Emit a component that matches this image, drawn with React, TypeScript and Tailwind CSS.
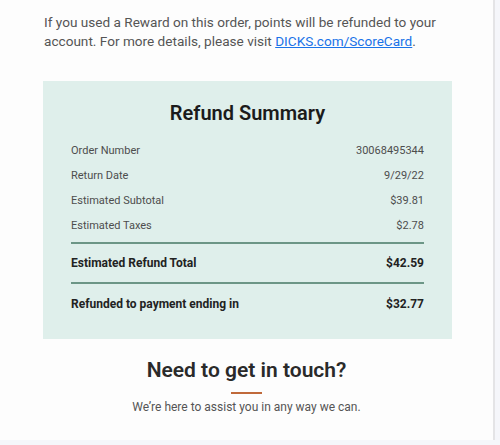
import React from "react";

const rows = [
  { label: "Order Number", value: "30068495344" },
  { label: "Return Date", value: "9/29/22" },
  { label: "Estimated Subtotal", value: "$39.81" },
  { label: "Estimated Taxes", value: "$2.78" },
];

export default function App() {
  return (
    <div className="flex h-[445px] w-[500px] flex-col bg-[#f5f6fa] font-['Roboto',sans-serif]">
      <div className="flex w-[495px] flex-1 flex-col border-r-2 border-[#e4e4e6] bg-[#fdfdfd] pt-[13px]">
        {/* Reward notice */}
        <p className="pl-[44px] pr-[40px] text-[13.6px] leading-[19px] text-[#555555]">
          If you used a Reward on this order, points will be refunded to your account. For more details, please visit{" "}
          <a href="#" className="text-[#1a73e8] underline">
            DICKS.com/ScoreCard
          </a>
          .
        </p>

        {/* Summary panel */}
        <div className="ml-[43px] mr-[41px] mt-[30px] h-[258px] bg-[#dfefeb] pl-[28px] pr-[28px] pt-[19px]">
          <h2 className="text-center text-[20px] font-semibold leading-[26px] text-[#1b1b1b]">Refund Summary</h2>
          <div className="mt-[13px] flex flex-col">
            {rows.map((r) => (
              <div key={r.label} className="flex h-[25px] items-center justify-between text-[11px] text-[#4d4d4d]">
                <span>{r.label}</span>
                <span>{r.value}</span>
              </div>
            ))}
          </div>
          <div className="mt-[3px] border-t-2 border-[#6c9686]" />
          <div className="flex h-[38px] items-center justify-between text-[12px] font-bold text-[#222222]">
            <span>Estimated Refund Total</span>
            <span>$42.59</span>
          </div>
          <div className="border-t-2 border-[#6c9686]" />
          <div className="flex h-[40px] items-center justify-between text-[12px] font-bold text-[#222222]">
            <span>Refunded to payment ending in</span>
            <span>$32.77</span>
          </div>
        </div>

        {/* Contact */}
        <div className="mt-[18px] flex flex-col items-center">
          <h3 className="text-[21px] font-semibold leading-[26px] text-[#2a2a2a]">Need to get in touch?</h3>
          <div className="mt-[9px] h-[2px] w-[31px] bg-[#c0693a]" />
          <p className="mt-[4px] text-[12px] text-[#555555]">We’re here to assist you in any way we can.</p>
        </div>
      </div>
      <div className="h-[5px]" />
    </div>
  );
}
